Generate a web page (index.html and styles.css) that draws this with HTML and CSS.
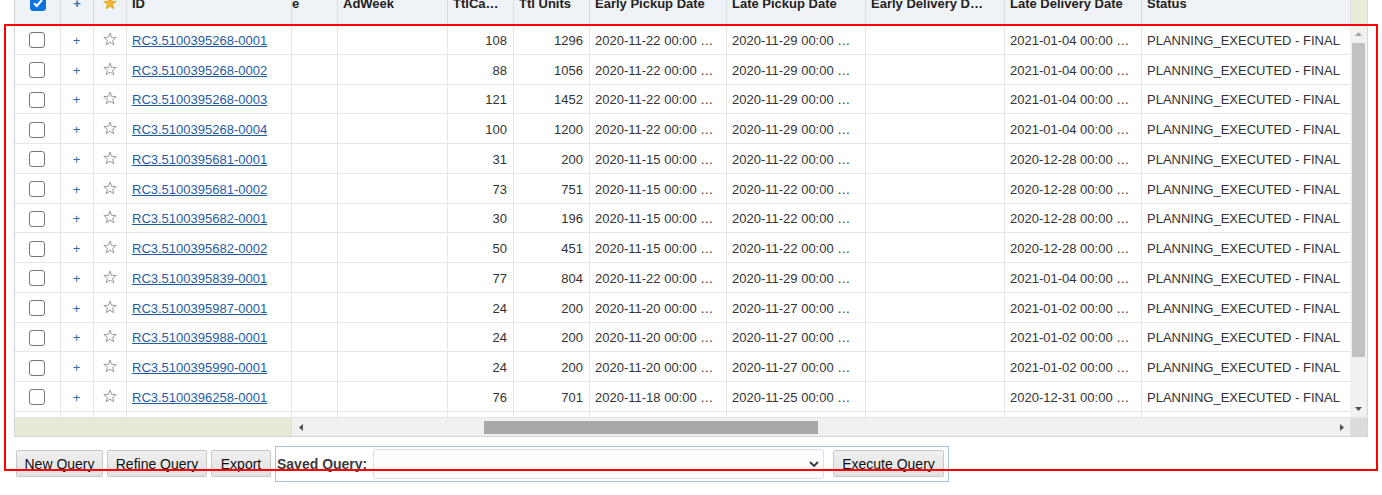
FILE: index.html
```html
<!DOCTYPE html>
<html>
<head>
<meta charset="utf-8">
<link rel="stylesheet" href="styles.css">
</head>
<body>
<div class="page">
  <div class="grid">
    <div class="head">
      <div class="cols">
        <div class="hc c-center"><span class="cb cb-on"><svg width="12" height="12" viewBox="0 0 12 12"><path d="M2 6.2 L4.8 9 L10 3" fill="none" stroke="#fff" stroke-width="2.2"/></svg></span></div>
        <div class="hc c-center plus">+</div>
        <div class="hc c-center"><svg class="star" width="14" height="14" viewBox="0 0 14 14"><path d="M7 1 L8.59 5.32 L13.18 5.49 L9.57 8.33 L10.82 12.76 L7 10.2 L3.18 12.76 L4.43 8.33 L0.82 5.49 L5.41 5.32 Z" fill="#f4b730" stroke="#e2a21c" stroke-width="0.8"/></svg></div>
        <div class="hc">ID</div>
        <div class="hc hc-cut">e</div>
        <div class="hc">AdWeek</div>
        <div class="hc">TtlCa…</div>
        <div class="hc">Ttl Units</div>
        <div class="hc">Early Pickup Date</div>
        <div class="hc">Late Pickup Date</div>
        <div class="hc">Early Delivery D…</div>
        <div class="hc">Late Delivery Date</div>
        <div class="hc">Status</div>
      </div>
      <div class="head-pad"></div>
    </div>
    <div class="body">
      <div class="rows" id="rows"></div>
      <div class="vscroll">
        <div class="vbtn"><svg width="7" height="4" viewBox="0 0 7 4"><path d="M0 4 L3.5 0 L7 4 Z" fill="#a3a3a3"/></svg></div>
        <div class="vthumb"></div>
        <div class="vspace"></div>
        <div class="vbtn"><svg width="7" height="4" viewBox="0 0 7 4"><path d="M0 0 L3.5 4 L7 0 Z" fill="#505050"/></svg></div>
      </div>
    </div>
    <div class="hscroll">
      <div class="frozen-bar"></div>
      <div class="htrack">
        <div class="hbtn"><svg width="4" height="7" viewBox="0 0 4 7"><path d="M4 0 L0 3.5 L4 7 Z" fill="#505050"/></svg></div>
        <div class="hthumb"></div>
        <div class="hspace"></div>
        <div class="hbtn"><svg width="4" height="7" viewBox="0 0 4 7"><path d="M0 0 L4 3.5 L0 7 Z" fill="#505050"/></svg></div>
      </div>
      <div class="corner"></div>
    </div>
  </div>
  <div class="toolbar">
    <button class="btn btn-new">New Query</button>
    <button class="btn btn-refine">Refine Query</button>
    <button class="btn btn-export">Export</button>
    <div class="saved">
      <span class="saved-label">Saved Query:</span>
      <div class="select"><svg width="10" height="7" viewBox="0 0 10 7"><path d="M1 1 L5 5 L9 1" fill="none" stroke="#333" stroke-width="1.8"/></svg></div>
      <button class="btn btn-exec">Execute Query</button>
    </div>
  </div>
  <div class="annot"></div>
</div>
<script src="app.js"></script>
</body>
</html>
```

FILE: app.js
```js
var data = [
  ["RC3.5100395268-0001","108","1296","2020-11-22","2020-11-29","2021-01-04"],
  ["RC3.5100395268-0002","88","1056","2020-11-22","2020-11-29","2021-01-04"],
  ["RC3.5100395268-0003","121","1452","2020-11-22","2020-11-29","2021-01-04"],
  ["RC3.5100395268-0004","100","1200","2020-11-22","2020-11-29","2021-01-04"],
  ["RC3.5100395681-0001","31","200","2020-11-15","2020-11-22","2020-12-28"],
  ["RC3.5100395681-0002","73","751","2020-11-15","2020-11-22","2020-12-28"],
  ["RC3.5100395682-0001","30","196","2020-11-15","2020-11-22","2020-12-28"],
  ["RC3.5100395682-0002","50","451","2020-11-15","2020-11-22","2020-12-28"],
  ["RC3.5100395839-0001","77","804","2020-11-22","2020-11-29","2021-01-04"],
  ["RC3.5100395987-0001","24","200","2020-11-20","2020-11-27","2021-01-02"],
  ["RC3.5100395988-0001","24","200","2020-11-20","2020-11-27","2021-01-02"],
  ["RC3.5100395990-0001","24","200","2020-11-20","2020-11-27","2021-01-02"],
  ["RC3.5100396258-0001","76","701","2020-11-18","2020-11-25","2020-12-31"]
];
var star = '<svg class="star" width="14" height="14" viewBox="0 0 14 14"><path d="M7 1 L8.59 5.32 L13.18 5.49 L9.57 8.33 L10.82 12.76 L7 10.2 L3.18 12.76 L4.43 8.33 L0.82 5.49 L5.41 5.32 Z" fill="none" stroke="#9c9c9c" stroke-width="1"/></svg>';
var html = "";
data.forEach(function (r) {
  html += '<div class="cols row">' +
    '<div class="c c-center"><span class="cb"></span></div>' +
    '<div class="c c-center plus">+</div>' +
    '<div class="c c-center">' + star + '</div>' +
    '<div class="c"><a class="link" href="#">' + r[0] + '</a></div>' +
    '<div class="c"></div>' +
    '<div class="c"></div>' +
    '<div class="c c-num">' + r[1] + '</div>' +
    '<div class="c c-num">' + r[2] + '</div>' +
    '<div class="c">' + r[3] + ' 00:00 …</div>' +
    '<div class="c">' + r[4] + ' 00:00 …</div>' +
    '<div class="c"></div>' +
    '<div class="c">' + r[5] + ' 00:00 …</div>' +
    '<div class="c">PLANNING_EXECUTED - FINAL</div>' +
    '</div>';
});
html += '<div class="cols row">' + new Array(14).join('<div class="c"></div>') + '</div>';
document.getElementById("rows").innerHTML = html;
```

FILE: styles.css
```css
html, body {
  margin: 0;
  padding: 0;
  background: #fff;
}
body {
  font-family: "Liberation Sans", Arial, sans-serif;
  font-size: 13px;
  color: #333;
  overflow: hidden;
}
.page {
  position: relative;
  display: flow-root;
  width: 1382px;
  height: 495px;
}
.grid {
  margin: -11px 0 0 14px;
  width: 1354px;
  border: 1px solid #d6d6d6;
  border-top: none;
  box-sizing: border-box;
}
.cols {
  display: grid;
  grid-template-columns: 46px 33px 33px 165px 46px 110px 66px 76px 137px 139px 139px 137px 209px;
}
.head {
  display: flex;
  background: #eff2f6;
  height: 36px;
}
.hc {
  box-sizing: border-box;
  border-right: 1px solid #dadee4;
  padding: 7px 6px 0 5px;
  line-height: 15px;
  font-weight: bold;
  color: #222;
  white-space: nowrap;
  overflow: hidden;
}
.hc-cut {
  padding-left: 0;
}
.head .c-center {
  padding: 6px 0 0;
}
.head .plus {
  padding-top: 7px;
}
.head-pad {
  width: 17px;
  background: #ebebda;
}
.body {
  display: flex;
  height: 392px;
}
.rows {
  overflow: hidden;
  height: 392px;
}
.row {
  height: 29.75px;
}
.c {
  box-sizing: border-box;
  border-right: 1px solid #e6e6e6;
  border-bottom: 1px solid #e6e6e6;
  padding: 2px 6px 0 5px;
  display: flex;
  align-items: center;
  white-space: nowrap;
  overflow: hidden;
}
.c-center {
  justify-content: center;
  text-align: center;
}
.c-num {
  justify-content: flex-end;
}
.head .c-center {
  display: flex;
  justify-content: center;
  align-items: flex-start;
}
.plus {
  color: #2e6db5;
  font-size: 13px;
}
.cb {
  display: inline-block;
  width: 16px;
  height: 16px;
  box-sizing: border-box;
  border: 1px solid #767676;
  border-radius: 3px;
  background: #fff;
}
.cb-on {
  background: #0c74de;
  border-color: #0c74de;
  display: flex;
  align-items: center;
  justify-content: center;
}
.c .star {
  margin-top: -3px;
}
.head .star {
  margin-top: 1px;
}
.link {
  color: #1f5ca4;
  text-decoration: underline;
}
.vscroll {
  width: 17px;
  background: #f1f1f1;
  display: flex;
  flex-direction: column;
}
.vbtn {
  height: 17px;
  display: flex;
  align-items: center;
  justify-content: center;
  flex: none;
}
.vthumb {
  margin: 1px 2px 0;
  height: 314px;
  background: #c1c1c1;
  flex: none;
}
.vspace {
  flex: 1;
}
.hscroll {
  display: flex;
  height: 18px;
  border-top: 1px solid #e4e4e4;
}
.frozen-bar {
  width: 277px;
  box-sizing: border-box;
  border-right: 1px solid #dcdcdc;
  background: #e9e9d7;
}
.htrack {
  flex: 1;
  background: #f0f0f0;
  display: flex;
  align-items: center;
}
.hbtn {
  width: 17px;
  height: 17px;
  display: flex;
  align-items: center;
  justify-content: center;
  flex: none;
}
.hthumb {
  margin-left: 175px;
  width: 334px;
  height: 13px;
  background: #a8a8a8;
  flex: none;
}
.hspace {
  flex: 1;
}
.corner {
  width: 17px;
  background: #dcdcdc;
}
.toolbar {
  display: flex;
  align-items: flex-start;
  margin: 9px 0 0 16px;
}
.btn {
  font-family: "Liberation Sans", Arial, sans-serif;
  font-size: 14px;
  color: #111;
  height: 27px;
  margin: 4px 0 0;
  padding: 0;
  border: 1px solid #c8c8c8;
  border-radius: 2px;
  background: linear-gradient(#f0f0f0, #e2e2e2);
  box-sizing: border-box;
}
.btn-new { width: 87px; margin-right: 4px; }
.btn-refine { width: 100px; margin-right: 4px; }
.btn-export { width: 60px; margin-right: 4px; }
.btn-exec { width: 111px; margin: 3px 0 0 9px; }
.saved {
  display: flex;
  align-items: flex-start;
  width: 674px;
  height: 36px;
  box-sizing: border-box;
  border: 1px solid #a9c3df;
  padding: 0 0 0 1px;
}
.saved-label {
  font-size: 14px;
  font-weight: bold;
  color: #3c3c3c;
  margin-top: 9px;
  width: 96px;
}
.select {
  width: 451px;
  height: 30px;
  margin-top: 2px;
  box-sizing: border-box;
  border: 1px solid #dde2e8;
  border-radius: 3px;
  background: #fcfdfe;
  display: flex;
  align-items: center;
  justify-content: flex-end;
  padding-right: 4px;
}
.annot {
  position: absolute;
  left: 4px;
  top: 24px;
  width: 1374px;
  height: 447px;
  border: 2px solid #ff0000;
  box-sizing: border-box;
  pointer-events: none;
}
```
